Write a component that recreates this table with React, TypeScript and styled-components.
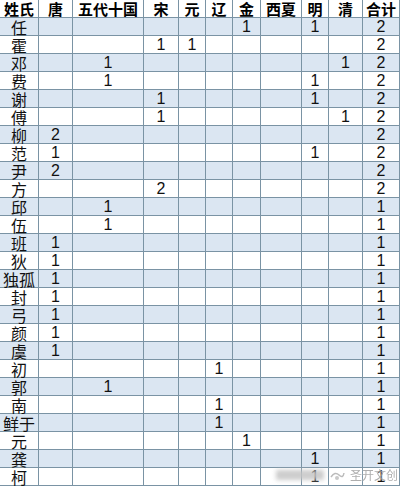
import React from 'react';
import styled, { createGlobalStyle } from 'styled-components';

const GlobalStyle = createGlobalStyle`
  html, body {
    margin: 0;
    padding: 0;
    background: #ffffff;
  }
`;

const columns = ['姓氏', '唐', '五代十国', '宋', '元', '辽', '金', '西夏', '明', '清', '合计'];

// name, then one value per dynasty column, then total
const rows: [string, string[], number][] = [
  ['任', ['', '', '', '', '', '1', '', '1', ''], 2],
  ['霍', ['', '', '1', '1', '', '', '', '', ''], 2],
  ['邓', ['', '1', '', '', '', '', '', '', '1'], 2],
  ['费', ['', '1', '', '', '', '', '', '1', ''], 2],
  ['谢', ['', '', '1', '', '', '', '', '1', ''], 2],
  ['傅', ['', '', '1', '', '', '', '', '', '1'], 2],
  ['柳', ['2', '', '', '', '', '', '', '', ''], 2],
  ['范', ['1', '', '', '', '', '', '', '1', ''], 2],
  ['尹', ['2', '', '', '', '', '', '', '', ''], 2],
  ['方', ['', '', '2', '', '', '', '', '', ''], 2],
  ['邱', ['', '1', '', '', '', '', '', '', ''], 1],
  ['伍', ['', '1', '', '', '', '', '', '', ''], 1],
  ['班', ['1', '', '', '', '', '', '', '', ''], 1],
  ['狄', ['1', '', '', '', '', '', '', '', ''], 1],
  ['独孤', ['1', '', '', '', '', '', '', '', ''], 1],
  ['封', ['1', '', '', '', '', '', '', '', ''], 1],
  ['弓', ['1', '', '', '', '', '', '', '', ''], 1],
  ['颜', ['1', '', '', '', '', '', '', '', ''], 1],
  ['虞', ['1', '', '', '', '', '', '', '', ''], 1],
  ['初', ['', '', '', '', '1', '', '', '', ''], 1],
  ['郭', ['', '1', '', '', '', '', '', '', ''], 1],
  ['南', ['', '', '', '', '1', '', '', '', ''], 1],
  ['鲜于', ['', '', '', '', '1', '', '', '', ''], 1],
  ['元', ['', '', '', '', '', '1', '', '', ''], 1],
  ['龚', ['', '', '', '', '', '', '', '1', ''], 1],
  ['柯', ['', '', '', '', '', '', '', '1', ''], 1],
];

const Page = styled.div`
  position: relative;
  width: 400px;
  height: 489px;
  overflow: hidden;
  background: #ffffff;
`;

const Sheet = styled.div`
  display: grid;
  grid-template-columns: 39px 34px 71px 35px 27px 27px 28px 41px 27px 34px 37px;
  grid-auto-rows: 18px;
`;

const HeadCell = styled.div`
  box-sizing: border-box;
  display: flex;
  align-items: center;
  justify-content: center;
  border-right: 1px solid #7a93a4;
  border-bottom: 1px solid #7a93a4;
  font-family: 'Noto Sans CJK SC', sans-serif;
  font-size: 15px;
  font-weight: 700;
  color: #000000;
  white-space: nowrap;
  line-height: 16px;
`;

const Cell = styled.div<{ $striped: boolean; $name?: boolean }>`
  box-sizing: border-box;
  display: flex;
  align-items: center;
  justify-content: center;
  background: ${({ $striped }) => ($striped ? '#dbe6f2' : '#ffffff')};
  border-right: 1px solid #7a93a4;
  border-bottom: 1px solid #7a93a4;
  font-family: ${({ $name }) =>
    $name ? "'Noto Sans CJK SC', sans-serif" : "'Liberation Sans', sans-serif"};
  font-size: 16px;
  color: #111111;
  white-space: nowrap;
  line-height: 16px;
`;

const Watermark = styled.div`
  position: absolute;
  left: 276px;
  top: 468px;
  display: flex;
  align-items: center;
  gap: 5px;
  opacity: 0.85;
  white-space: nowrap;
`;

const Smudge = styled.div`
  width: 48px;
  height: 10px;
  background: #c4c4c4;
  filter: blur(2px);
`;

const MarkText = styled.span`
  font-family: 'Noto Sans CJK SC', sans-serif;
  font-size: 12px;
  line-height: 14px;
  color: #a0a0a0;
  text-shadow: 0 0 2px #ffffff;
`;

export default function App() {
  return (
    <Page>
      <GlobalStyle />
      <Sheet>
        {columns.map((c) => (
          <HeadCell key={c}>{c}</HeadCell>
        ))}
        {rows.map(([name, vals, total], i) => (
          <React.Fragment key={name + i}>
            <Cell $striped={i % 2 === 0} $name>
              {name}
            </Cell>
            {vals.map((v, j) => (
              <Cell key={j} $striped={i % 2 === 0}>
                {v}
              </Cell>
            ))}
            <Cell $striped={i % 2 === 0}>{total}</Cell>
          </React.Fragment>
        ))}
      </Sheet>
      <Watermark>
        <Smudge />
        <svg width="16" height="12" viewBox="0 0 16 12">
          <path d="M2 8 Q6 2 10 6 T15 4" stroke="#b0b0b0" strokeWidth="1.5" fill="none" />
          <circle cx="8" cy="9" r="2" fill="#c0c0c0" />
        </svg>
        <MarkText>圣开文创</MarkText>
      </Watermark>
    </Page>
  );
}
